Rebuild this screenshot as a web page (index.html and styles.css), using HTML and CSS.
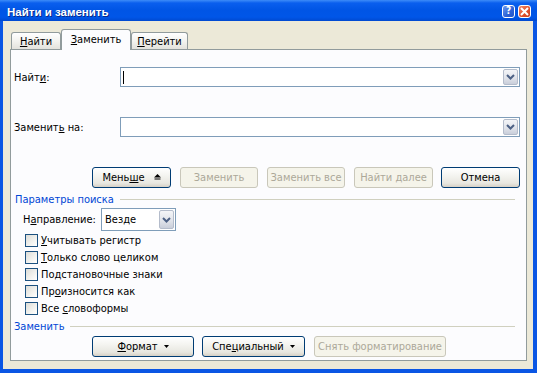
FILE: index.html
```html
<!DOCTYPE html>
<html lang="ru">
<head>
<meta charset="utf-8">
<title>Найти и заменить</title>
<link rel="stylesheet" href="styles.css">
</head>
<body>
<div class="window">
  <div class="titlebar">
    <span class="title">Найти и заменить</span>
    <span class="tbtn help">?</span>
    <span class="tbtn close"><svg width="9" height="9" viewBox="0 0 9 9"><path d="M1 1 L8 8 M8 1 L1 8" stroke="#fff" stroke-width="2" fill="none"/></svg></span>
  </div>
  <div class="frame">
    <div class="client">
      <div class="tabs">
        <div class="tab tab-find"><span><u>Н</u>айти</span></div>
        <div class="tab tab-replace active"><span><u>З</u>аменить</span></div>
        <div class="tab tab-goto"><span><u>П</u>ерейти</span></div>
      </div>
      <div class="panel">
        <div class="field-row row-find">
          <span class="field-label">Найт<u>и</u>:</span>
          <div class="combo combo-wide">
            <span class="caret"></span>
            <span class="dd"><svg width="9" height="6" viewBox="0 0 9 6"><polyline points="1,1 4.5,4.5 8,1" fill="none" stroke="#4d6185" stroke-width="2"/></svg></span>
          </div>
        </div>
        <div class="field-row row-replace">
          <span class="field-label">Заменит<u>ь</u> на:</span>
          <div class="combo combo-wide">
            <span class="dd"><svg width="9" height="6" viewBox="0 0 9 6"><polyline points="1,1 4.5,4.5 8,1" fill="none" stroke="#4d6185" stroke-width="2"/></svg></span>
          </div>
        </div>
        <div class="button-row">
          <button class="btn b-less"><span>Мень<u>ш</u>е</span><svg class="eject" width="7" height="6" viewBox="0 0 7 6"><path d="M3.5 0 L7 3.5 L0 3.5 Z" fill="#000"/><rect x="0.5" y="4.5" width="6" height="1" fill="#000"/></svg></button>
          <button class="btn b-replace" disabled><span>Заменить</span></button>
          <button class="btn b-replace-all" disabled><span>Заменить все</span></button>
          <button class="btn b-next" disabled><span>Найти далее</span></button>
          <button class="btn b-cancel"><span>Отмена</span></button>
        </div>
        <div class="group-title g-search">
          <span>Параметры поиска</span><span class="rule"></span>
        </div>
        <div class="dir-row">
          <span class="dir-label">Н<u>а</u>правление:</span>
          <div class="combo combo-dir">
            <span class="combo-text">Везде</span>
            <span class="dd"><svg width="9" height="6" viewBox="0 0 9 6"><polyline points="1,1 4.5,4.5 8,1" fill="none" stroke="#4d6185" stroke-width="2"/></svg></span>
          </div>
        </div>
        <div class="checks">
          <div class="check"><span class="box"></span><span class="check-text"><u>У</u>читывать регистр</span></div>
          <div class="check"><span class="box"></span><span class="check-text"><u>Т</u>олько слово целиком</span></div>
          <div class="check"><span class="box"></span><span class="check-text">Подстановочные знаки</span></div>
          <div class="check"><span class="box"></span><span class="check-text">Пр<u>о</u>износится как</span></div>
          <div class="check"><span class="box"></span><span class="check-text">Все <u>с</u>ловоформы</span></div>
        </div>
        <div class="group-title g-replace">
          <span>Заменить</span><span class="rule"></span>
        </div>
        <div class="button-row bottom-row">
          <button class="btn b-format"><span><u>Ф</u>ормат</span><svg class="tri" width="5" height="3" viewBox="0 0 5 3"><path d="M0 0 L5 0 L2.5 3 Z" fill="#000"/></svg></button>
          <button class="btn b-special"><span>Спе<u>ц</u>иальный</span><svg class="tri" width="5" height="3" viewBox="0 0 5 3"><path d="M0 0 L5 0 L2.5 3 Z" fill="#000"/></svg></button>
          <button class="btn b-clear" disabled><span>Снять форматирование</span></button>
        </div>
      </div>
    </div>
  </div>
</div>
</body>
</html>
```
FILE: styles.css
```css
html, body {
  margin: 0;
  padding: 0;
  background: #ffffff;
}
body {
  font-family: "DejaVu Sans Condensed", "DejaVu Sans", sans-serif;
  font-stretch: condensed;
  font-size: 11px;
  color: #000;
}
u { text-decoration: underline; text-underline-offset: 1px; }

.window {
  width: 537px;
  height: 373px;
  display: flex;
  flex-direction: column;
  overflow: hidden;
}

.titlebar {
  height: 21px;
  flex: none;
  display: flex;
  align-items: center;
  padding: 0 6px 0 7px;
  background: linear-gradient(to bottom, #3d8cf8 0px, #0a5fee 3px, #0055e5 10px, #0056e8 17px, #0049d0 21px);
}
.title {
  flex: 1;
  color: #fff;
  font-family: "Liberation Sans", Arial, sans-serif;
  font-stretch: normal;
  font-weight: bold;
  font-size: 11.5px;
  padding-top: 2px;
  text-shadow: 1px 1px 0 #0a2a8a;
}
.tbtn {
  width: 11px;
  height: 11px;
  border: 1px solid #fff;
  border-radius: 3px;
  display: flex;
  align-items: center;
  justify-content: center;
  color: #fff;
  font-family: "DejaVu Sans", sans-serif;
  font-weight: bold;
  font-size: 10px;
  line-height: 1;
  margin-top: 1px;
}
.help {
  background: linear-gradient(135deg, #6e9bf0, #2c61d6 60%, #2456c8);
  margin-right: 3px;
}
.close {
  background: linear-gradient(135deg, #f08a6a, #e0512c 60%, #c8401e);
}

.frame {
  flex: 1;
  display: flex;
  background: #0a56e4;
  padding: 0 5px 4px 3px;
}
.client {
  flex: 1;
  display: flex;
  flex-direction: column;
  background: #ece9d8;
  padding: 8px 6px 8px 7px;
}

.tabs {
  height: 20px;
  display: flex;
  align-items: flex-end;
  padding-left: 1px;
  flex: none;
}
.tab {
  height: 16px;
  box-sizing: border-box;
  border: 1px solid #919b9c;
  border-bottom: none;
  border-radius: 3px 3px 0 0;
  background: linear-gradient(to bottom, #ffffff, #f3f3ef 50%, #e3e2dc);
  display: flex;
  align-items: center;
  justify-content: center;
  padding-top: 1px;
}
.tab-find { width: 50px; height: 17px; }
.tab-goto { width: 57px; height: 17px; }
.tab.active {
  width: 70px;
  height: 21px;
  margin-bottom: -1px;
  background: #fcfcfe;
  position: relative;
  z-index: 1;
  padding-top: 0;
  padding-bottom: 1px;
}

.panel {
  flex: 1;
  border: 1px solid #919b9c;
  background: #fcfcfe;
  padding: 0 6px 0 3px;
  display: flex;
  flex-direction: column;
}

.field-row {
  display: flex;
  align-items: center;
  height: 20px;
}
.row-find { margin-top: 17px; }
.row-replace { margin-top: 30px; }
.field-label { width: 106px; }

.combo {
  box-sizing: border-box;
  border: 1px solid #7f9db9;
  background: #fff;
  display: flex;
  align-items: center;
  position: relative;
}
.combo-wide { flex: 1; height: 20px; }
.caret {
  width: 1px;
  height: 13px;
  background: #000;
  margin-left: 2px;
}
.dd {
  position: absolute;
  right: 0;
  top: 0;
  bottom: 0;
  width: 15px;
  box-sizing: border-box;
  border: 1px solid #b4bccb;
  border-radius: 2px;
  margin: 1px;
  background: linear-gradient(to bottom, #f4f5f8, #dfe2e9 60%, #c9ceda);
  display: flex;
  align-items: center;
  justify-content: center;
}

.button-row {
  display: flex;
  align-items: center;
  margin-top: 30px;
  padding-left: 78px;
}
.btn {
  height: 21px;
  box-sizing: border-box;
  border: 1px solid #003c74;
  border-radius: 3px;
  background: linear-gradient(to bottom, #ffffff, #f4f4f0 40%, #e8e7e0 80%, #d6d0c5);
  font-family: inherit;
  font-stretch: condensed;
  font-size: 11px;
  color: #000;
  padding: 0;
  display: flex;
  align-items: center;
  justify-content: center;
  gap: 9px;
}
.btn:disabled {
  border-color: #c9c7ba;
  background: #f5f4ea;
  color: #aca899;
}
.b-less { width: 79px; }
.b-replace { width: 78px; margin-left: 9px; }
.b-replace-all { width: 78px; margin-left: 9px; }
.b-next { width: 79px; margin-left: 9px; }
.b-cancel { width: 79px; margin-left: 8px; }
.eject { margin-top: -2px; }

.group-title {
  height: 13px;
  display: flex;
  align-items: center;
  color: #0046d5;
}
.group-title .rule {
  flex: 1;
  height: 1px;
  background: #d0d0bf;
  margin: 0 5px 0 6px;
}
.g-search { margin-top: 5px; padding-left: 1px; }
.g-replace { margin-top: 1px; }

.dir-row {
  display: flex;
  align-items: center;
  margin-top: 2px;
  padding-left: 9px;
}
.dir-label { width: 78px; }
.combo-dir { width: 75px; height: 23px; }
.combo-text { padding-left: 3px; }

.checks {
  margin-top: 3px;
  padding-left: 11px;
  display: flex;
  flex-direction: column;
}
.check {
  height: 17px;
  display: flex;
  align-items: flex-start;
  gap: 3px;
}
.check-text { line-height: 13px; }
.box {
  width: 13px;
  height: 13px;
  box-sizing: border-box;
  border: 1px solid #1c5180;
  background: linear-gradient(135deg, #dcdcd7, #f6f6f3 70%, #ffffff);
}

.bottom-row { margin-top: 3px; }
.b-format { width: 102px; gap: 6px; }
.b-special { width: 103px; margin-left: 8px; gap: 6px; }
.b-clear { width: 132px; margin-left: 9px; }
```
